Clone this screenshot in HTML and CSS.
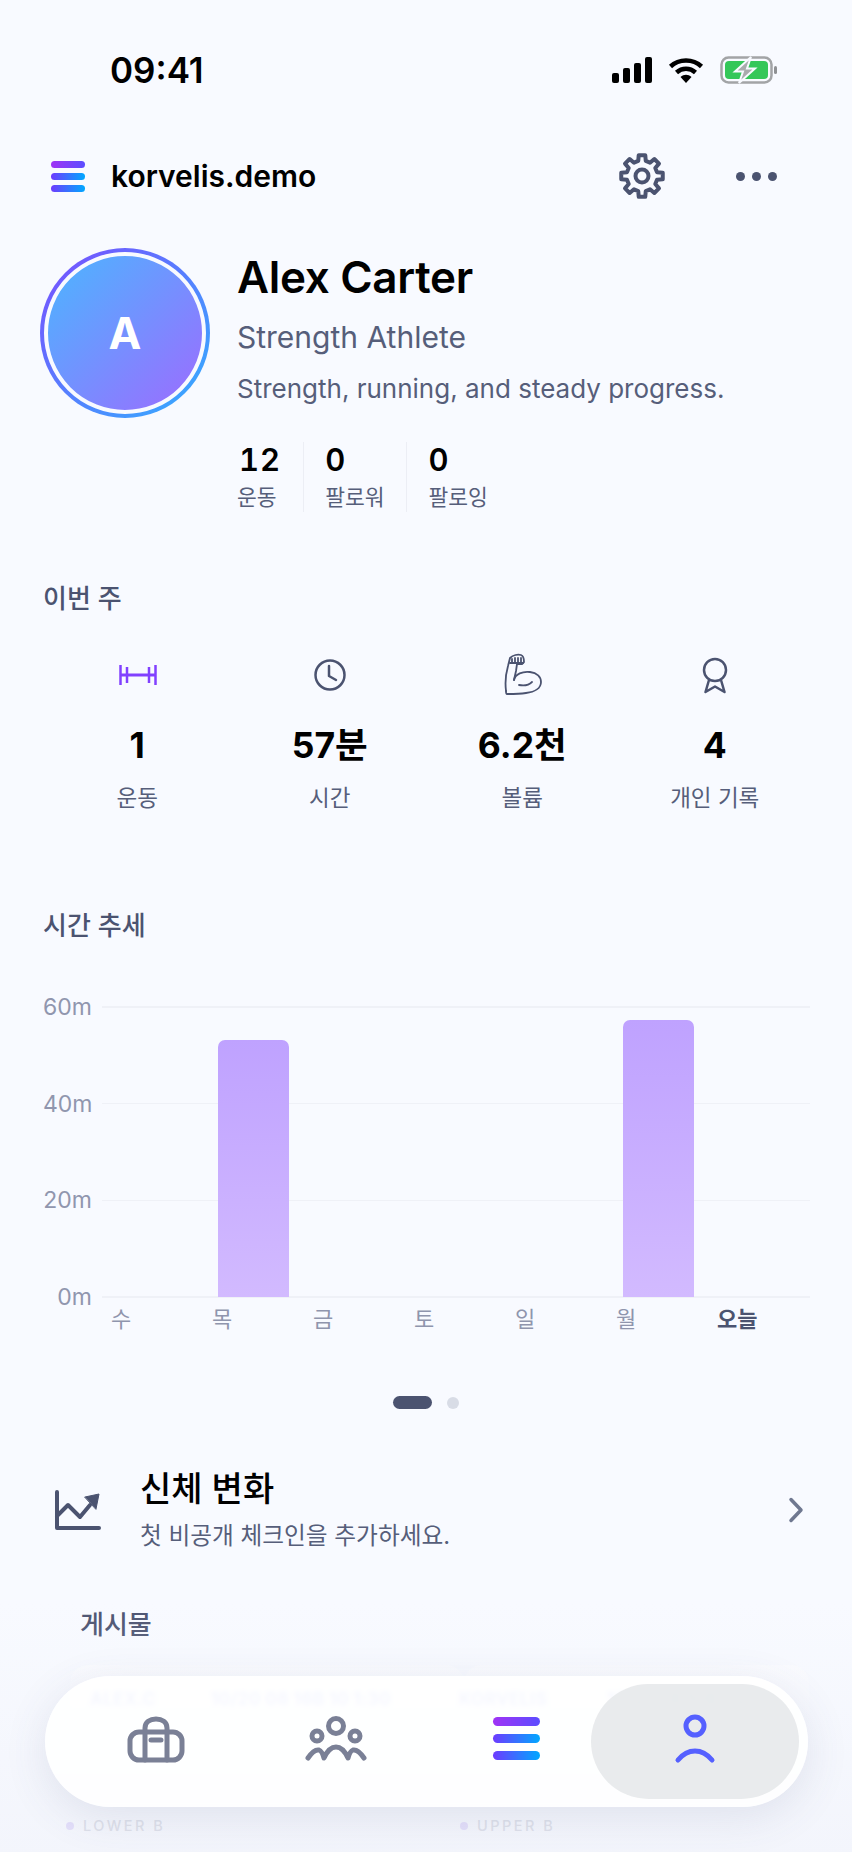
FILE: index.html
```html
<!doctype html>
<html lang="ko">

<head>
    <title>profile</title>
    <meta charset="UTF-8">
    <link rel="stylesheet" href="styles.css">
</head>

<body>
    <div class="screen">
        <div class="status">
            <span class="time">09:41</span>
            <div class="status-icons">
                <div class="signal"><i></i><i></i><i></i><i></i></div>
                <svg class="wifi" width="36" height="26" viewBox="0 0 36 26">
                    <path d="M2.5 9.5C11 1.500 25 1.500 33.500 9.500M8.500 15.500C14 10.500 22 10.500 27.500 15.500" fill="none" stroke="#000" stroke-width="4.500" />
                    <path d="M12.500 20C16 17 20 17 23.500 20L18 26Z" fill="#000" />
                </svg>
                <svg class="battery" width="58" height="28" viewBox="0 0 58 28">
                    <rect x="1.500" y="1.500" width="50" height="25" rx="7" fill="none" stroke="#a2a4a6" stroke-width="2.500" />
                    <rect x="5" y="5" width="43" height="18" rx="4" fill="#34c759" />
                    <rect x="54" y="10" width="3" height="8" rx="1.500" fill="#8f9194" />
                    <path d="M31 1L15 15.500H23L19 27L35 12.500H27Z" fill="#a9abad" stroke="#f8faff" stroke-width="2" />
                </svg>
            </div>
        </div>

        <header class="topbar">
            <div class="brand">
                <div class="logo"><span></span><span></span><span></span></div>
                <span class="brand-name">korvelis.demo</span>
            </div>
            <div class="top-actions">
                <svg width="48" height="48" viewBox="0 0 48 48" fill="none" stroke="#4b5370" stroke-width="4" stroke-linejoin="round">
                    <polygon points="20.25,8.96 20.72,3.25 27.28,3.25 27.75,8.96 31.98,10.72 36.34,7.01 40.99,11.66 37.28,16.02 39.04,20.25 44.75,20.72 44.75,27.28 39.04,27.75 37.28,31.98 40.99,36.34 36.34,40.99 31.98,37.28 27.75,39.04 27.28,44.75 20.72,44.75 20.25,39.04 16.02,37.28 11.66,40.99 7.01,36.34 10.72,31.98 8.96,27.75 3.25,27.28 3.25,20.72 8.96,20.25 10.72,16.02 7.01,11.66 11.66,7.01 16.02,10.72" />
                    <circle cx="24" cy="24" r="6.500" />
                </svg>
                <div class="dots"><i></i><i></i><i></i></div>
            </div>
        </header>

        <section class="profile">
            <div class="avatar-ring">
                <div class="avatar">A</div>
            </div>
            <div class="profile-info">
                <h1 class="name">Alex Carter</h1>
                <p class="role">Strength Athlete</p>
                <p class="bio">Strength, running, and steady progress.</p>
                <div class="counts">
                    <div class="count">
                        <b>12</b>
                        <span>운동</span>
                    </div>
                    <div class="count">
                        <b>0</b>
                        <span>팔로워</span>
                    </div>
                    <div class="count">
                        <b>0</b>
                        <span>팔로잉</span>
                    </div>
                </div>
            </div>
        </section>

        <h2 class="section-title week-title">이번 주</h2>
        <section class="week">
            <div class="week-item">
                <div class="week-icon">
                    <svg class="dumbbell" width="38" height="22" viewBox="0 0 38 22" fill="none" stroke="#8140ff" stroke-width="2.500">
                        <path d="M1.500 1V21M8 3V19M30 3V19M36.500 1V21" />
                        <path d="M1 11H37" stroke-width="3" />
                    </svg>
                </div>
                <b>1</b>
                <span>운동</span>
            </div>
            <div class="week-item">
                <div class="week-icon">
                    <svg width="32" height="32" viewBox="0 0 32 32" fill="none" stroke="#4b5370" stroke-width="2.500" stroke-linecap="round" stroke-linejoin="round">
                        <circle cx="16" cy="16" r="14.500" />
                        <path d="M15 7V17L22 21" />
                    </svg>
                </div>
                <b>57분</b>
                <span>시간</span>
            </div>
            <div class="week-item">
                <div class="week-icon">
                    <svg width="40" height="42" viewBox="3 5 40 42" fill="none" stroke="#4b5370" stroke-width="1.800" stroke-linecap="round" stroke-linejoin="round">
                        <path d="M7 42C6 34 7 24 9 17L11 9C14 6 19 5 22 6C25 7 25 10 25 13L23 15H18L17 22L15 31" />
                        <path d="M15 31C16 25 24 22 31 23C38 24 42 28 42 33C42 39 36 43 27 44C20 45 13 45 8 45C7 45 7 44 7 42" />
                        <path d="M20 36C25 37 30 36 33 33M11 14H24M13 10V14M16 9V14M19 9V14M22 9V14" />
                    </svg>
                </div>
                <b>6.2천</b>
                <span>볼륨</span>
            </div>
            <div class="week-item">
                <div class="week-icon">
                    <svg width="26" height="37" viewBox="0 0 26 37" fill="none" stroke="#4b5370" stroke-width="2.500" stroke-linejoin="round">
                        <circle cx="13" cy="13" r="11" />
                        <path d="M7 23L3.500 35L13 29.500L22.500 35L19 23" />
                    </svg>
                </div>
                <b>4</b>
                <span>개인 기록</span>
            </div>
        </section>

        <h2 class="section-title trend-title">시간 추세</h2>
        <section class="chart">
            <div class="plot">
                <div class="grid-row"><span>60m</span><i></i></div>
                <div class="grid-row"><span>40m</span><i></i></div>
                <div class="grid-row"><span>20m</span><i></i></div>
                <div class="grid-row"><span>0m</span><i></i></div>
                <div class="bars">
                    <div class="bar-slot"></div>
                    <div class="bar-slot"><div class="bar" style="height: 257px"></div></div>
                    <div class="bar-slot"></div>
                    <div class="bar-slot"></div>
                    <div class="bar-slot"></div>
                    <div class="bar-slot"><div class="bar" style="height: 277px"></div></div>
                    <div class="bar-slot"></div>
                </div>
            </div>
            <div class="days">
                <span>수</span><span>목</span><span>금</span><span>토</span><span>일</span><span>월</span><span class="today">오늘</span>
            </div>
        </section>

        <div class="pager"><span class="on"></span><span></span></div>

        <section class="body-row">
            <svg class="body-icon" width="48" height="42" viewBox="0 0 48 42" fill="none" stroke="#4b5370" stroke-width="4" stroke-linecap="round" stroke-linejoin="round">
                <path d="M3 3V39H45" />
                <path d="M3 27L14 16L26 28L36 16" />
                <polygon points="31,8 45,5 42,20" fill="#4b5370" stroke-width="1" />
            </svg>
            <div class="body-text">
                <h3>신체 변화</h3>
                <p>첫 비공개 체크인을 추가하세요.</p>
            </div>
            <svg class="chevron" width="16" height="26" viewBox="0 0 16 26" fill="none" stroke="#6f7890" stroke-width="3.500" stroke-linecap="round" stroke-linejoin="round">
                <path d="M3 2.500L13 13L3 23.500" />
            </svg>
        </section>

        <h2 class="section-title posts-title">게시물</h2>
        <section class="posts">
            <article class="post">
                <div class="post-meta"><span>ALEX.C</span><span>10/20 08 16B 10 1:30</span></div>
                <div class="post-tag"><i></i>LOWER B</div>
            </article>
            <article class="post">
                <div class="post-meta post-meta-back"><span>KORVELIS</span><span>10/21 08 10B 1:20</span></div>
                <div class="post-tag"><i></i>UPPER B</div>
            </article>
        </section>

        <div class="dock">
            <nav class="tabbar">
                <div class="tab">
                    <svg width="58" height="46" viewBox="0 0 58 46" fill="none" stroke="#7a8096" stroke-width="5" stroke-linecap="round" stroke-linejoin="round">
                        <rect x="3" y="16" width="52" height="28" rx="9" />
                        <path d="M18 16V12C18 6 23 3 29 3C35 3 40 6 40 12V16M18 16V44M40 16V44M24 24H34" />
                    </svg>
                </div>
                <div class="tab">
                    <svg width="62" height="46" viewBox="0 0 62 46" fill="none" stroke="#7a8096" stroke-width="5" stroke-linecap="round" stroke-linejoin="round">
                        <circle cx="31" cy="10" r="7.500" />
                        <circle cx="12" cy="20" r="5" />
                        <circle cx="50" cy="20" r="5" />
                        <path d="M3 42Q9 33 14 34Q17 35 19 42Q24 31 31 31Q38 31 43 42Q45 35 48 34Q53 33 59 42" />
                    </svg>
                </div>
                <div class="tab tab-last">
                    <div class="logo logo-big"><span></span><span></span><span></span></div>
                </div>
                <div class="tab tab-on">
                    <svg width="40" height="48" viewBox="0 0 40 48" fill="none" stroke="#5560ff" stroke-width="5" stroke-linecap="round">
                        <circle cx="20" cy="11" r="9" />
                        <path d="M3 45C13 33 27 33 37 45" />
                    </svg>
                </div>
            </nav>
        </div>
    </div>
</body>

</html>
```

FILE: styles.css
```css
* {
    box-sizing: border-box;
}

body {
    margin: 0;
    font-family: Inter, "Noto Sans CJK KR", sans-serif;
    color: #000;
}

h1, h2, h3, p {
    margin: 0;
}

svg {
    overflow: visible;
}

.screen {
    position: relative;
    width: 852px;
    height: 1852px;
    overflow: hidden;
    background: #f8faff;
}

/* status bar */
.status {
    display: flex;
    justify-content: space-between;
    align-items: center;
    height: 48px;
    margin-top: 46px;
    padding: 0 74px 0 110px;
}

.time {
    font-size: 35px;
    font-weight: 600;
}

.status-icons {
    display: flex;
    align-items: center;
    gap: 16px;
}

.signal {
    display: flex;
    align-items: flex-end;
    gap: 4px;
    height: 26px;
}

.signal i {
    width: 7px;
    border-radius: 2px;
    background: #000;
}

.signal i:nth-child(1) { height: 10px; }
.signal i:nth-child(2) { height: 15px; }
.signal i:nth-child(3) { height: 20px; }
.signal i:nth-child(4) { height: 26px; }

/* top bar */
.topbar {
    display: flex;
    justify-content: space-between;
    align-items: center;
    height: 56px;
    margin-top: 54px;
    padding: 0 75px 0 51px;
}

.brand {
    display: flex;
    align-items: center;
    gap: 26px;
}

.logo {
    display: flex;
    flex-direction: column;
    gap: 5px;
    width: 34px;
}

.logo span {
    height: 7px;
    border-radius: 4px;
    background: linear-gradient(90deg, #6d3bff, #00a8ff);
}

.logo span:first-child {
    background: linear-gradient(90deg, #a033f5, #5b4dff);
}

.brand-name {
    font-size: 30px;
    font-weight: 600;
}

.top-actions {
    display: flex;
    align-items: center;
    gap: 70px;
}

.dots {
    display: flex;
    gap: 7px;
}

.dots i {
    width: 9px;
    height: 9px;
    border-radius: 50%;
    background: #4b5370;
}

/* profile */
.profile {
    display: flex;
    gap: 27px;
    margin-top: 44px;
    padding-left: 40px;
}

.avatar-ring {
    flex: none;
    width: 170px;
    height: 170px;
    padding: 4px;
    border-radius: 50%;
    background: linear-gradient(135deg, #7a4dff, #33b0ff);
}

.avatar {
    display: flex;
    justify-content: center;
    align-items: center;
    width: 100%;
    height: 100%;
    border: 4px solid #f8faff;
    border-radius: 50%;
    background: linear-gradient(135deg, #4bb6ff, #9d6bff);
    color: #fff;
    font-size: 44px;
    font-weight: 700;
}

.profile-info {
    padding-top: 2px;
}

.name {
    font-size: 44px;
    font-weight: 600;
    line-height: 54px;
    letter-spacing: -0.300px;
}

.role {
    margin-top: 15px;
    font-size: 30px;
    line-height: 36px;
    color: #565e7a;
}

.bio {
    margin-top: 17px;
    font-size: 26px;
    line-height: 34px;
    color: #565e7a;
}

.counts {
    display: flex;
    margin-top: 36px;
}

.count {
    display: flex;
    flex-direction: column;
    gap: 4px;
    padding-right: 22px;
    margin-right: 21px;
    border-right: 1.500px solid #eceef5;
}

.count:last-child {
    border-right: 0;
}

.count b {
    font-size: 31px;
    font-weight: 600;
    line-height: 36px;
    letter-spacing: 1px;
    font-variant-numeric: tabular-nums;
}

.count:first-child b {
    padding-left: 2px;
}

.count span {
    font-size: 21.500px;
    line-height: 30px;
    color: #565e7a;
}

/* section titles */
.section-title {
    font-size: 26px;
    font-weight: 500;
    line-height: 34px;
    color: #4b5370;
}

.week-title {
    margin-top: 70px;
    padding-left: 43px;
}

.trend-title {
    margin-top: 95px;
    padding-left: 43px;
}

.posts-title {
    margin-top: 54px;
    padding-left: 80px;
}

/* this week */
.week {
    display: grid;
    grid-template-columns: repeat(4, 1fr);
    margin-top: 38px;
    padding: 0 41px;
}

.week-item {
    display: flex;
    flex-direction: column;
    align-items: center;
}

.week-icon {
    display: flex;
    justify-content: center;
    align-items: center;
    height: 42px;
}

.dumbbell {
    margin-left: 2px;
}

.week-item b {
    margin-top: 28px;
    font-size: 35.500px;
    font-weight: 700;
    line-height: 44px;
}

.week-item span {
    margin-top: 14px;
    font-size: 22.500px;
    line-height: 32px;
    color: #565e7a;
}

/* chart */
.chart {
    margin-top: 64px;
    padding: 0 42px 0 43px;
}

.plot {
    position: relative;
    display: flex;
    flex-direction: column;
    justify-content: space-between;
    height: 290px;
}

.grid-row {
    display: flex;
    align-items: center;
    gap: 10px;
    height: 0;
}

.grid-row span {
    width: 49px;
    font-size: 23px;
    text-align: right;
    color: #9096ae;
}

.grid-row i {
    flex: 1;
    height: 1.500px;
    background: #eff1f7;
}

.bars {
    position: absolute;
    top: 0;
    right: 0;
    bottom: 0;
    left: 59px;
    display: grid;
    grid-template-columns: repeat(7, 1fr);
}

.bar-slot {
    display: flex;
    justify-content: center;
    align-items: flex-end;
}

.bar {
    width: 71px;
    border-radius: 7px 7px 0 0;
    background: linear-gradient(180deg, #bfa2ff, #d2baff);
}

.days {
    display: grid;
    grid-template-columns: repeat(7, 101px);
    margin-top: 6px;
    margin-left: 68px;
    font-size: 22px;
    line-height: 32px;
    color: #8f95ad;
}

.today {
    font-weight: 600;
    color: #4b5370;
}

.pager {
    display: flex;
    justify-content: center;
    align-items: center;
    gap: 15px;
    margin-top: 61px;
    padding-right: 1px;
}

.pager span {
    width: 12px;
    height: 12px;
    border-radius: 50%;
    background: #d8dce6;
}

.pager .on {
    width: 39px;
    height: 13px;
    border-radius: 7px;
    background: #4b5370;
}

/* body changes */
.body-row {
    display: flex;
    align-items: center;
    margin-top: 57px;
    padding: 0 48px 0 54px;
}

.body-text {
    flex: 1;
    margin-left: 38px;
}

.body-text h3 {
    font-size: 34px;
    font-weight: 500;
    line-height: 46px;
}

.body-text p {
    margin-top: 6px;
    font-size: 23.700px;
    line-height: 36px;
    color: #565e7a;
}

/* posts, mostly hidden under the tab bar */
.posts {
    display: grid;
    grid-template-columns: 394px 345px;
    margin-top: 23px;
    padding-left: 70px;
}

.post {
    height: 185px;
    padding: 23px 0 0 20px;
    border-radius: 18px 18px 0 0;
    background: linear-gradient(180deg, #fbfcff, #f8faff 30%);
}

.post-meta {
    display: flex;
    gap: 55px;
    font-size: 17px;
    font-weight: 700;
    line-height: 22px;
    letter-spacing: 0.500px;
    color: #8fa0f0;
}

.post-meta-back {
    margin-left: -25px;
    gap: 60px;
}

.post-tag {
    display: flex;
    align-items: center;
    gap: 9px;
    margin-top: 106px;
    margin-left: -24px;
    font-size: 14.500px;
    font-weight: 500;
    line-height: 20px;
    letter-spacing: 2.500px;
    color: #c8ccd8;
}

.post-tag i {
    width: 8px;
    height: 8px;
    border-radius: 50%;
    background: #d3c8f9;
}

/* tab bar */
.dock {
    position: absolute;
    right: 0;
    bottom: 0;
    left: 0;
    height: 250px;
    padding: 74px 44px 0 45px;
    background: linear-gradient(180deg, rgba(240, 242, 250, 0), rgba(240, 242, 250, 0.6));
}

.tabbar {
    display: flex;
    align-items: stretch;
    height: 131px;
    padding: 8px 8px 8px 36px;
    border-radius: 66px;
    background: rgba(255, 255, 255, 0.9);
    backdrop-filter: blur(2px);
    box-shadow: 0 10px 44px rgba(70, 80, 120, 0.12);
}

.tab {
    display: flex;
    flex: none;
    justify-content: center;
    align-items: center;
    width: 150px;
    margin-right: 30px;
    padding-bottom: 6px;
}

.tab-last {
    margin-right: 0;
}

.tab-on {
    width: 208px;
    margin-right: 0;
    border-radius: 58px;
    background: rgba(228, 230, 233, 0.82);
}

.logo-big {
    width: 47px;
    gap: 8px;
}

.logo-big span {
    height: 9px;
    border-radius: 5px;
}
```
